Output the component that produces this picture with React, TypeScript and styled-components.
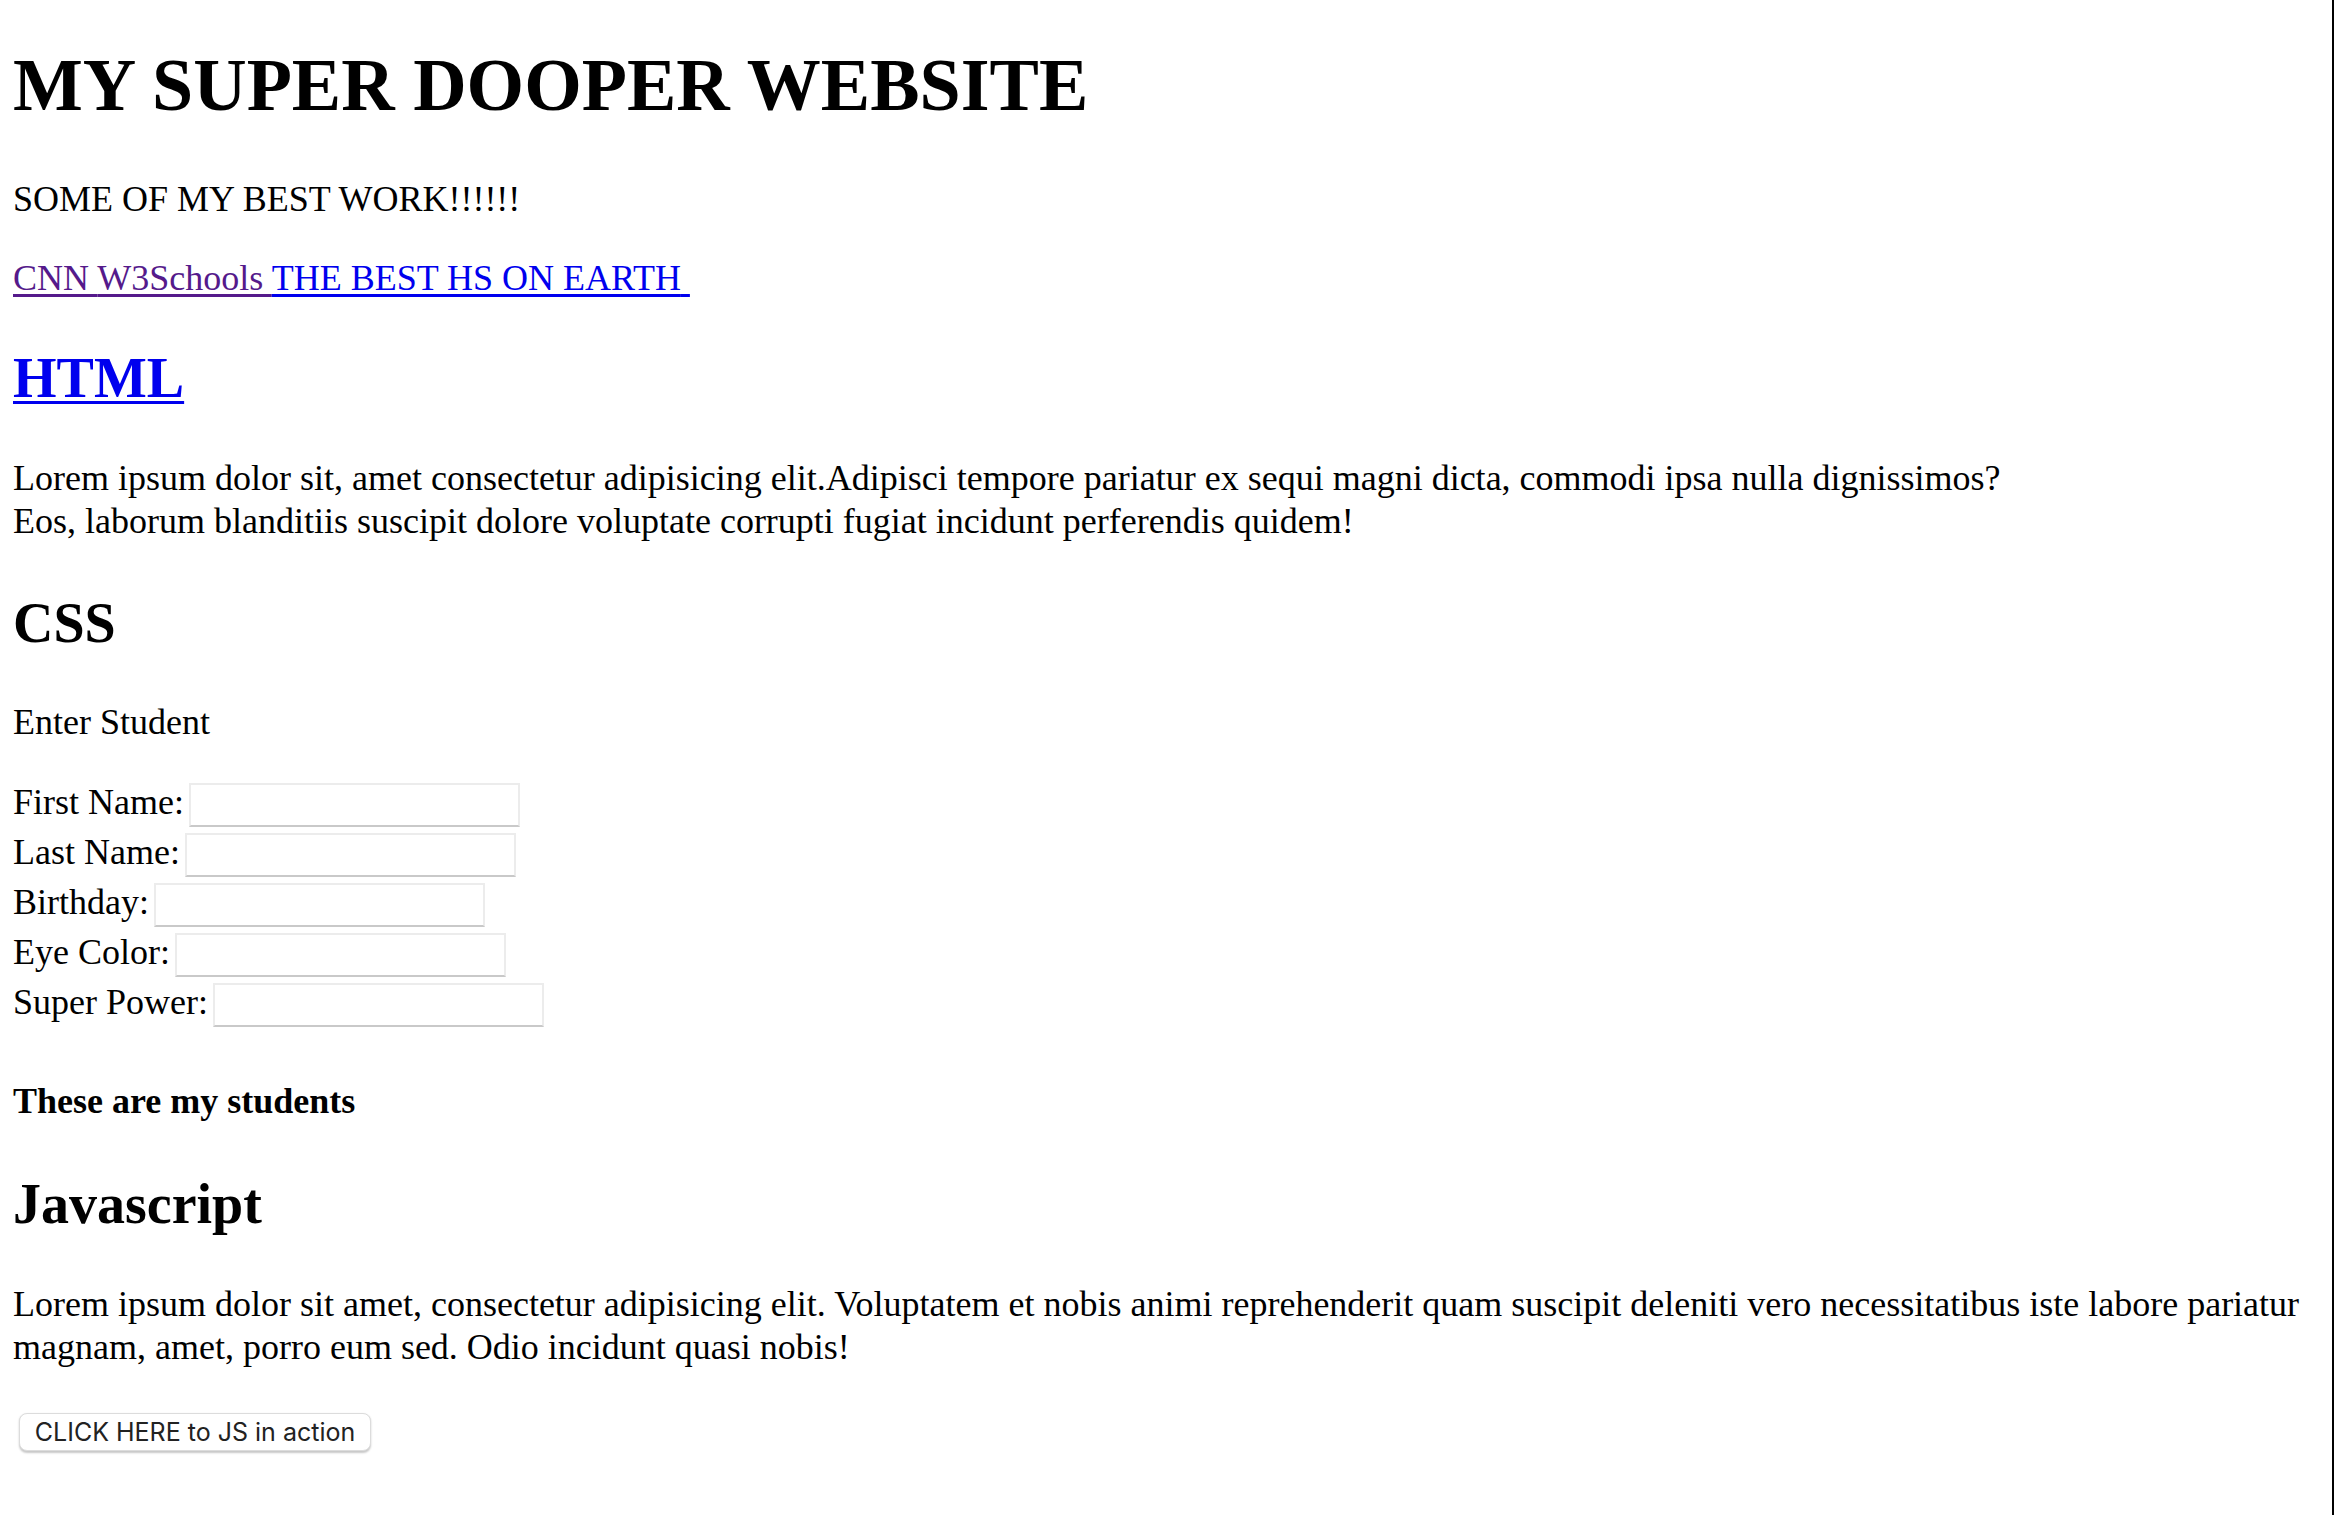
import styled, { createGlobalStyle } from "styled-components";

const GlobalStyle = createGlobalStyle`
  html,
  body {
    margin: 0;
    padding: 0;
    background: #fff;
  }
`;

const Page = styled.main`
  box-sizing: border-box;
  min-height: 100vh;
  width: 100%;
  padding: 0 12px 60px 13px;
  border-right: 2px solid #000;
  display: flex;
  flex-direction: column;
  align-items: flex-start;
  color: #000;
  font-family: "Liberation Serif", "Times New Roman", serif;
`;

const Title = styled.h1`
  margin: 42px 0 0;
  font-size: 74px;
  line-height: 86px;
  font-weight: 700;
`;

const Heading = styled.h2<{ $gap?: number }>`
  margin: ${({ $gap = 47 }) => $gap}px 0 0;
  font-size: 56px;
  line-height: 64px;
  font-weight: 700;
`;

const SubHeading = styled.h4`
  margin: 53px 0 0;
  font-size: 36px;
  line-height: 43px;
  font-weight: 700;
`;

const Text = styled.p<{ $gap?: number }>`
  margin: ${({ $gap = 47 }) => $gap}px 0 0;
  font-size: 36px;
  line-height: 43px;
`;

const Link = styled.a<{ $visited?: boolean }>`
  color: ${({ $visited }) => ($visited ? "#551a8b" : "#0000ee")};
  text-decoration: underline;
  text-decoration-thickness: 3px;
  text-underline-offset: 4px;
`;

const Form = styled.form`
  margin-top: 33px;
  display: flex;
  flex-direction: column;
`;

const Row = styled.label`
  display: flex;
  align-items: flex-end;
  height: 50px;
  font-size: 36px;
  line-height: 50px;
`;

const Field = styled.input`
  box-sizing: border-box;
  width: 331px;
  height: 44px;
  margin: 0 0 0 5px;
  padding: 0 6px;
  border: 2px solid #ececec;
  border-bottom-color: #c9c9c9;
  background: #fff;
  font-size: 30px;
`;

const ActionButton = styled.button`
  margin: 44px 0 0 6px;
  width: 352px;
  height: 38px;
  padding: 0;
  border: 1px solid #dcdcdc;
  border-radius: 8px;
  background: #fff;
  box-shadow: 0 1.5px 2px rgba(0, 0, 0, 0.22);
  color: #222;
  font-family: Inter, "Noto Sans", "Liberation Sans", sans-serif;
  font-size: 25px;
  line-height: 36px;
  text-align: center;
`;

const fields = ["First Name:", "Last Name:", "Birthday:", "Eye Color:", "Super Power:"];

export default function App() {
  return (
    <>
      <GlobalStyle />
      <Page>
        <Title>MY SUPER DOOPER WEBSITE</Title>
        <Text $gap={50}>SOME OF MY BEST WORK!!!!!!</Text>
        <Text $gap={36}>
          <Link $visited href="#">CNN </Link>
          <Link $visited href="#">W3Schools </Link>
          <Link href="#">THE BEST HS ON EARTH{"\u00a0"}</Link>
        </Text>

        <Heading $gap={46}>
          <Link href="#">HTML</Link>
        </Heading>
        <Text>
          Lorem ipsum dolor sit, amet consectetur adipisicing elit.Adipisci tempore pariatur ex sequi
          magni dicta, commodi ipsa nulla dignissimos?
          <br />
          Eos, laborum blanditiis suscipit dolore voluptate corrupti fugiat incidunt perferendis quidem!
        </Text>

        <Heading $gap={48}>CSS</Heading>
        <Text $gap={46}>Enter Student</Text>
        <Form>
          {fields.map((f) => (
            <Row key={f}>
              {f}
              <Field type="text" />
            </Row>
          ))}
        </Form>
        <SubHeading>These are my students</SubHeading>

        <Heading $gap={49}>Javascript</Heading>
        <Text>
          Lorem ipsum dolor sit amet, consectetur adipisicing elit. Voluptatem et nobis animi
          reprehenderit quam suscipit deleniti vero necessitatibus iste labore pariatur magnam, amet,
          porro eum sed. Odio incidunt quasi nobis!
        </Text>
        <ActionButton type="button">CLICK HERE to JS in action</ActionButton>
      </Page>
    </>
  );
}
